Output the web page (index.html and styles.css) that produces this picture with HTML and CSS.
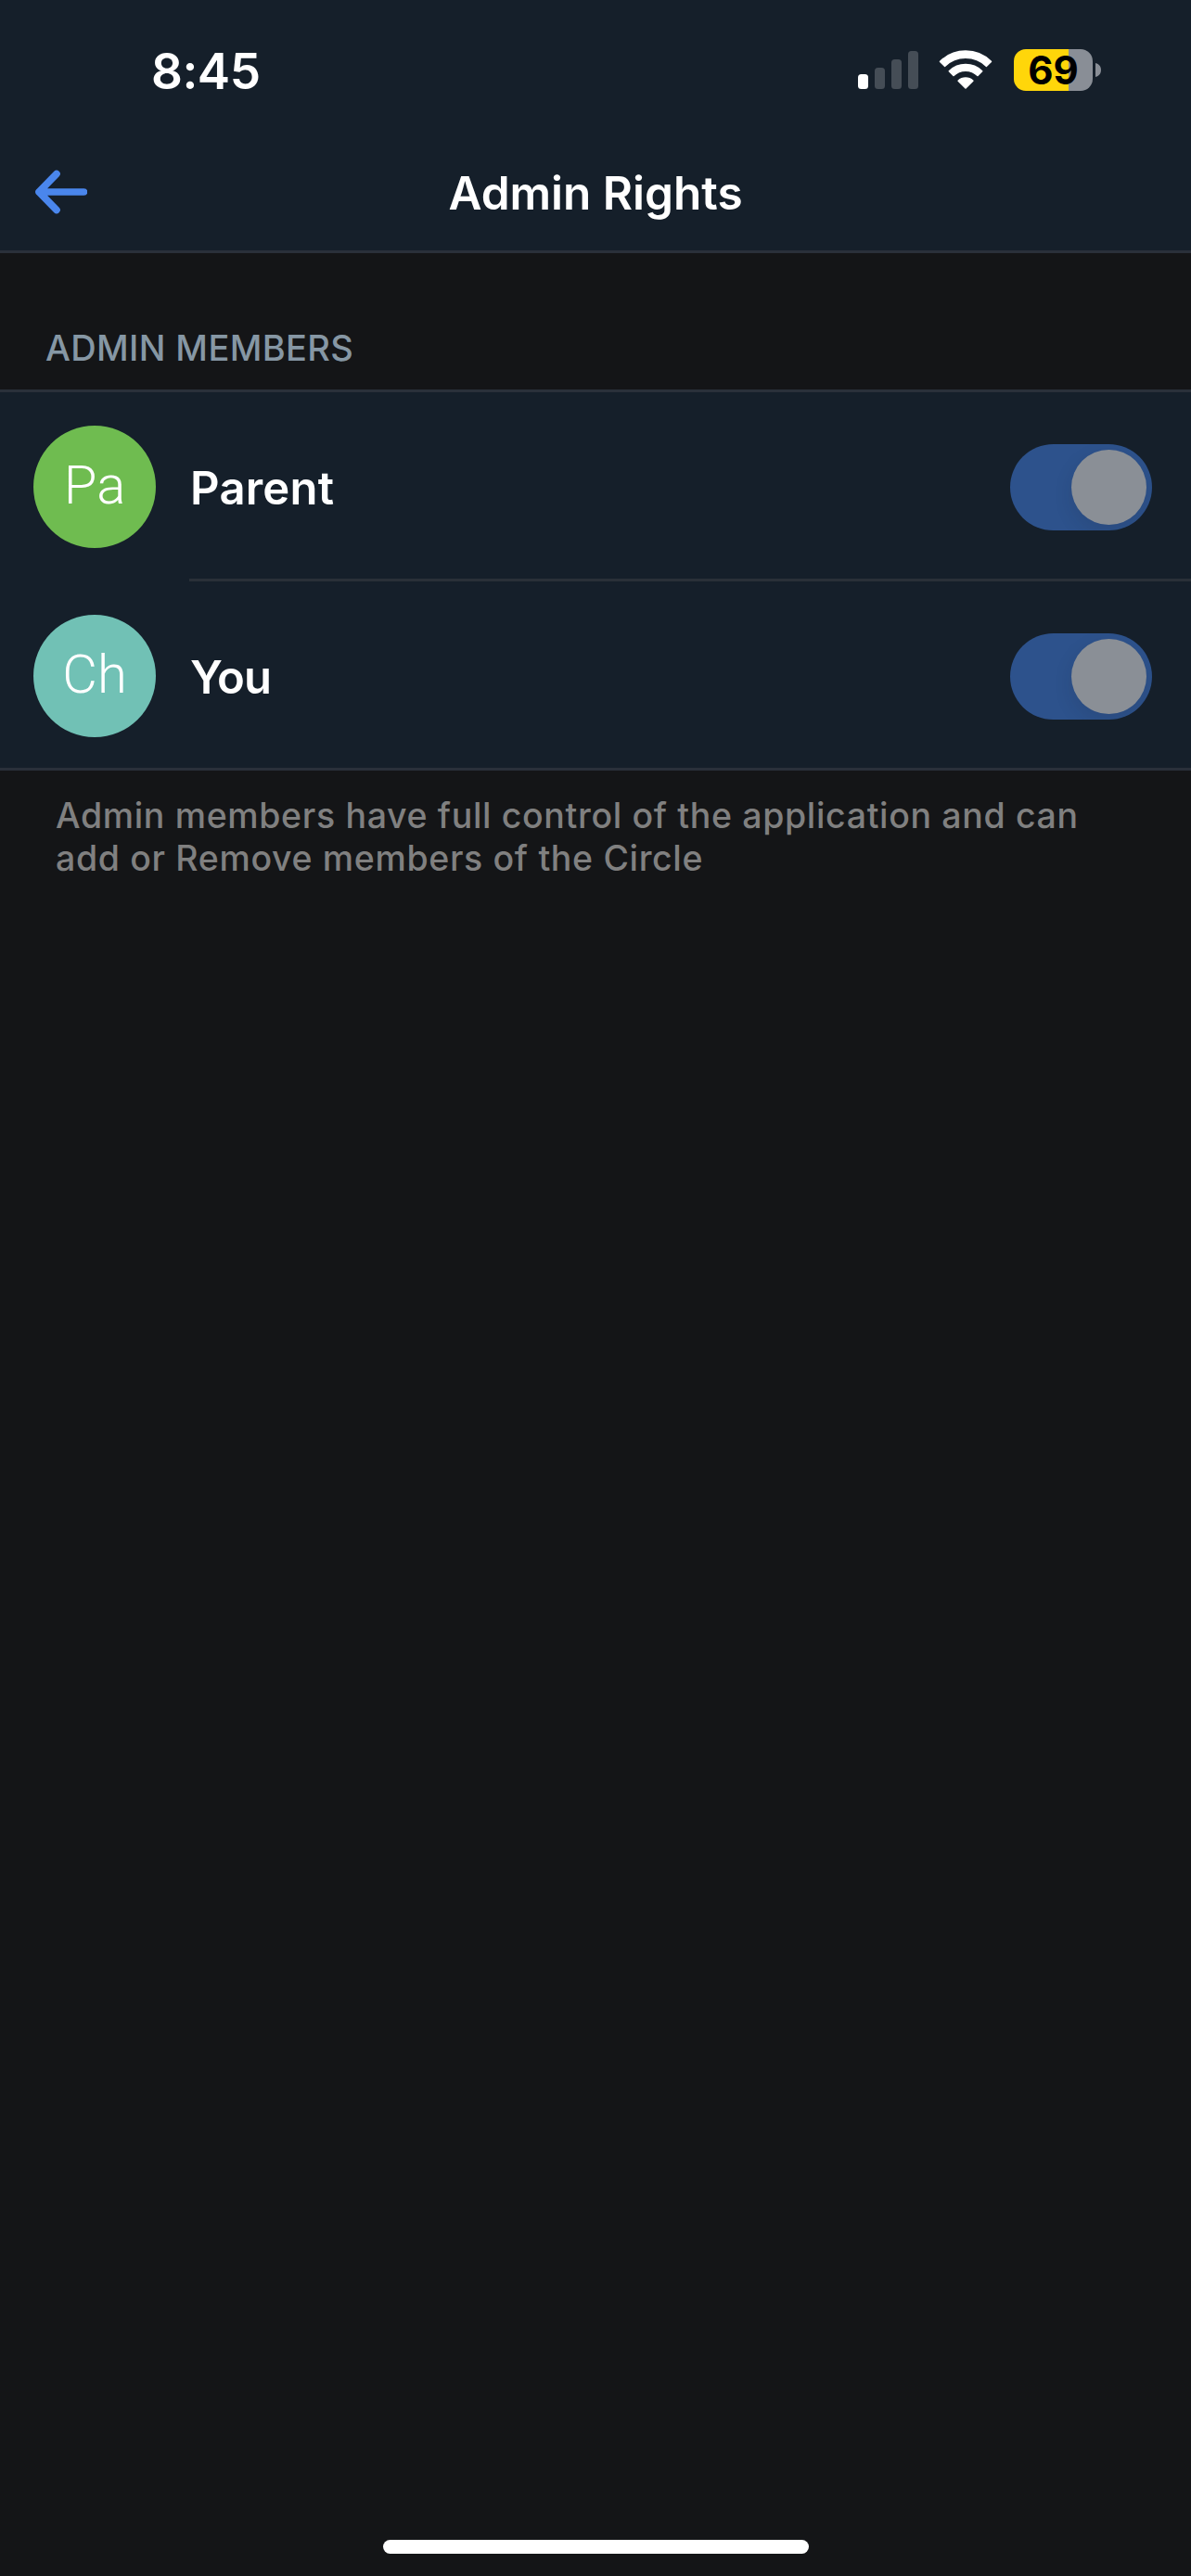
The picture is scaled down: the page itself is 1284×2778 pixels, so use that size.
FILE: index.html
```html
<!DOCTYPE html>
<html lang="en">
<head>
<meta charset="utf-8">
<title>Admin Rights</title>
<link rel="stylesheet" href="styles.css">
</head>
<body>
<header class="header">
  <div class="status">
    <span class="time">8:45</span>
    <div class="indicators">
      <svg class="signal" viewBox="0 0 65 41" width="65" height="41">
        <rect x="0" y="25" width="11" height="16" rx="3.5" fill="#fff"/>
        <g fill="#454d56">
          <rect x="18" y="18" width="11" height="23" rx="3.5"/>
          <rect x="36" y="9" width="11" height="32" rx="3.5"/>
          <rect x="54" y="0" width="11" height="41" rx="3.5"/>
        </g>
      </svg>
      <svg class="wifi" viewBox="0 0 58 42" width="58" height="42" fill="#fff" stroke="#fff" stroke-width="1.6" stroke-linejoin="round">
        <path d="M1.6 12.4A39 39 0 0 1 56.4 12.4L51.5 17.3A32.4 32.4 0 0 0 6.5 17.3Z"/>
        <path d="M11.3 22.8A25.4 25.4 0 0 1 46.7 22.8L42 27.5A18.4 18.4 0 0 0 16 27.5Z"/>
        <path d="M21.2 33.2A11.5 11.5 0 0 1 36.8 33.2L29 41Z"/>
      </svg>
      <div class="battery">
        <div class="cell"><span class="level">69</span></div>
        <svg class="nub" viewBox="0 0 6 15" width="6" height="15"><path d="M0 0C4 1 6 4 6 7.5S4 14 0 15Z" fill="#898e96"/></svg>
      </div>
    </div>
  </div>
  <nav class="nav">
    <svg class="back" viewBox="0 0 58 48" width="58" height="48" fill="none" stroke="#4a86ec" stroke-width="7.6" stroke-linecap="round" stroke-linejoin="round">
      <path d="M54.5 24H6M25 4.5L6 24L25 43.5"/>
    </svg>
    <h1 class="title">Admin Rights</h1>
  </nav>
</header>
<main class="main">
  <h2 class="section">ADMIN MEMBERS</h2>
  <ul class="list">
    <li class="row">
      <span class="avatar green">Pa</span>
      <div class="body"><span class="name">Parent</span><span class="switch"><span class="knob"></span></span></div>
    </li>
    <li class="row">
      <span class="avatar teal">Ch</span>
      <div class="body"><span class="name short">You</span><span class="switch"><span class="knob"></span></span></div>
    </li>
  </ul>
  <p class="note">Admin members have full control of the application and can<br>add or Remove members of the Circle</p>
</main>
<footer class="home"><span class="bar"></span></footer>
</body>
</html>
```
FILE: styles.css
```css
* { box-sizing: border-box; margin: 0; padding: 0; }
body {
  height: 2778px;
  display: flex;
  flex-direction: column;
  background: #141517;
  color: #fff;
  font-family: Inter, "Liberation Sans", sans-serif;
}
.header { height: 273px; background: #151f2a; border-bottom: 3px solid #2a303a; }
.status {
  height: 144px;
  padding: 47px 97px 0 163px;
  display: flex;
  justify-content: space-between;
  align-items: flex-start;
}
.time { font-size: 53px; line-height: 60px; font-weight: 600; letter-spacing: -0.5px; }
.indicators { display: flex; align-items: flex-start; padding-top: 6px; }
.signal { margin-top: 2px; margin-right: 22px; }
.wifi { margin-top: 1px; margin-right: 23px; }
.battery { display: flex; align-items: center; gap: 3px; }
.cell {
  width: 85px;
  height: 45px;
  border-radius: 13px;
  background: linear-gradient(90deg, #ffd60a 59px, #898e96 59px);
  display: flex;
  justify-content: center;
}
.level { font-size: 42px; line-height: 46px; font-weight: 700; color: #000; }
.nav {
  height: 126px;
  padding: 0 36px;
  display: grid;
  grid-template-columns: 58px 1fr 58px;
  align-items: center;
}
.title { text-align: center; font-size: 49.5px; line-height: 60px; font-weight: 600; padding-top: 2px; }
.main { flex: 1; }
.section {
  height: 147px;
  padding: 77px 0 0 49px;
  font-size: 38px;
  line-height: 50px;
  font-weight: 450;
  letter-spacing: 0.35px;
  color: #8697a4;
}
.list { list-style: none; background: #151f2a; border-top: 3px solid #2a303a; border-bottom: 3px solid #2a303a; }
.row { height: 204px; padding-left: 36px; display: flex; gap: 36px; align-items: center; }
.row:last-child { height: 201px; align-items: flex-start; }
.row:last-child .avatar { margin-top: 36px; }
.avatar {
  width: 132px;
  height: 132px;
  border-radius: 50%;
  display: flex;
  justify-content: center;
  font-family: Roboto, sans-serif;
  font-size: 58px;
  line-height: 128px;
  font-weight: 300;
}
.green { background: #6fbc50; }
.teal { background: #71c1b5; }
.body {
  flex: 1;
  height: 204px;
  padding: 1px 42px 0 1px;
  box-shadow: inset 0 -3px #2a3038;
  display: flex;
  align-items: center;
  justify-content: space-between;
}
.row:last-child .body { box-shadow: none; }
.name { font-size: 49px; line-height: 60px; font-weight: 600; letter-spacing: 0.2px; padding-top: 2px; }
.short { letter-spacing: -1px; }
.switch {
  width: 153px;
  height: 93px;
  padding: 6px;
  border-radius: 47px;
  background: #2d528c;
  overflow: hidden;
  display: flex;
  justify-content: flex-end;
}
.knob { width: 81px; height: 81px; border-radius: 50%; background: #8a8f96; box-shadow: 0 8px 20px rgba(22, 31, 42, 0.13); }
.note { padding: 26px 0 0 60px; font-size: 37.5px; line-height: 46px; font-weight: 500; letter-spacing: 0.65px; white-space: nowrap; color: #808080; }
.home { height: 39px; display: flex; justify-content: center; }
.bar { width: 459px; height: 15px; border-radius: 8px; background: #fff; }
```
